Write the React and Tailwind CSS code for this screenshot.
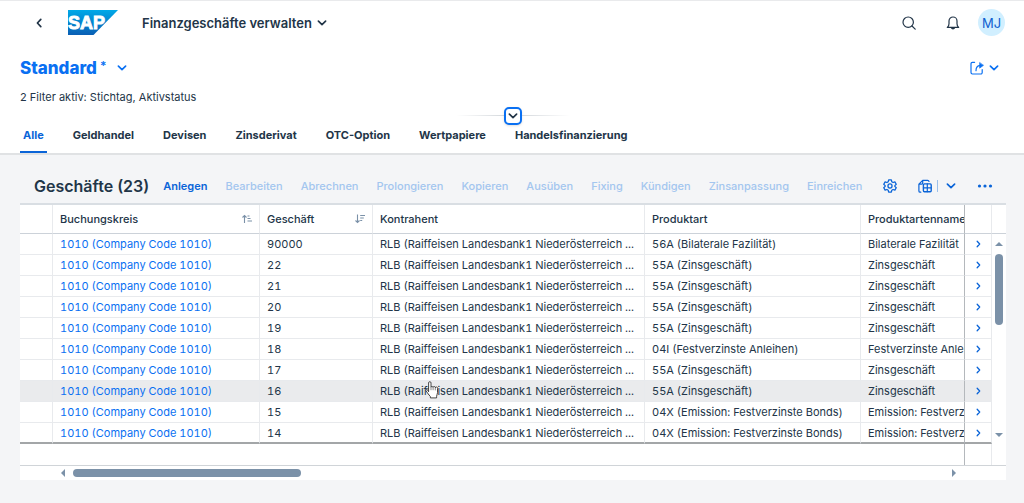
import React from "react";

const tabs = ["Alle", "Geldhandel", "Devisen", "Zinsderivat", "OTC-Option", "Wertpapiere", "Handelsfinanzierung"];

const actions = [
  "Bearbeiten",
  "Abrechnen",
  "Prolongieren",
  "Kopieren",
  "Ausüben",
  "Fixing",
  "Kündigen",
  "Zinsanpassung",
  "Einreichen",
];

const rows = [
  ["90000", "56A (Bilaterale Fazilität)", "Bilaterale Fazilität"],
  ["22", "55A (Zinsgeschäft)", "Zinsgeschäft"],
  ["21", "55A (Zinsgeschäft)", "Zinsgeschäft"],
  ["20", "55A (Zinsgeschäft)", "Zinsgeschäft"],
  ["19", "55A (Zinsgeschäft)", "Zinsgeschäft"],
  ["18", "04I (Festverzinste Anleihen)", "Festverzinste Anleihen"],
  ["17", "55A (Zinsgeschäft)", "Zinsgeschäft"],
  ["16", "55A (Zinsgeschäft)", "Zinsgeschäft"],
  ["15", "04X (Emission: Festverzinste Bonds)", "Emission: Festverzinste Bonds"],
  ["14", "04X (Emission: Festverzinste Bonds)", "Emission: Festverzinste Bonds"],
];

const hovered = "16";

function Chevron({ className = "h-2 w-3" }) {
  return (
    <svg viewBox="0 0 12 8" className={className} fill="none" stroke="currentColor" strokeWidth="1.7" strokeLinecap="round" strokeLinejoin="round" aria-hidden="true">
      <path d="M2.4 2.2 6 5.6l3.6-3.4" />
    </svg>
  );
}

function SapLogo() {
  return (
    <svg viewBox="0 0 50 25" className="h-[25px] w-[50px]" role="img" aria-label="SAP">
      <defs>
        <linearGradient id="sapBlue" x1="0" y1="0" x2="0" y2="1">
          <stop offset="0" stopColor="#00a9e8" />
          <stop offset="1" stopColor="#0a5fb4" />
        </linearGradient>
      </defs>
      <path d="M0 0h50L25.500 25H0z" fill="url(#sapBlue)" />
      <text x="0" y="19" fontFamily="Liberation Sans, Arial, sans-serif" fontWeight="700" fontSize="18" fill="#fff" stroke="#fff" strokeWidth="0.9">
        SAP
      </text>
    </svg>
  );
}

function SearchIcon() {
  return (
    <svg viewBox="0 0 14 14" className="h-3.5 w-3.5" fill="none" stroke="currentColor" strokeWidth="1.2" strokeLinecap="round" aria-hidden="true">
      <circle cx="6.200" cy="6.200" r="5.200" />
      <path d="m10 10 3.200 3.200" />
    </svg>
  );
}

function BellIcon() {
  return (
    <svg viewBox="0 0 14 14" className="h-3.5 w-3.5" fill="none" stroke="currentColor" strokeWidth="1.2" strokeLinejoin="round" aria-hidden="true">
      <path d="M1.300 11.400c1.300-1 1.700-2 1.700-3.700V5a4 4 0 0 1 8 0v2.700c0 1.700.4 2.700 1.700 3.700z" />
      <path d="M5.400 11.800a1.700 1.500 0 0 0 3.200 0z" fill="currentColor" />
    </svg>
  );
}

function ShareIcon() {
  return (
    <svg viewBox="0 0 14 14" className="h-3.5 w-3.5" fill="none" stroke="currentColor" strokeWidth="1.2" strokeLinecap="round" strokeLinejoin="round" aria-hidden="true">
      <path d="M4.600 1.300H2.400A1.400 1.400 0 0 0 1 2.700v8.900A1.400 1.400 0 0 0 2.400 13h8.400a1.400 1.400 0 0 0 1.400-1.400V8.500" />
      <path d="M6 9.700C6 6.400 7.400 4.600 10 4.600" />
      <path d="M9.600 1.800v5.400l3.700-2.700z" fill="currentColor" strokeWidth="0.6" />
    </svg>
  );
}

function GearIcon() {
  return (
    <svg viewBox="0 0 24 24" className="h-3.5 w-3.5" fill="none" stroke="currentColor" strokeWidth="2.2" strokeLinejoin="round" aria-hidden="true">
      <path d="M9.700 1.500h4.600l.8 3.300 2.100 1.200 3.200-1 2.300 4-2.400 2.300v1.400l2.400 2.300-2.300 4-3.200-1-2.100 1.200-.8 3.300H9.700l-.8-3.300L6.800 18l-3.200 1-2.300-4 2.400-2.300v-1.400L1.300 9l2.300-4 3.200 1 2.100-1.200z" />
      <circle cx="12" cy="12" r="3.500" />
    </svg>
  );
}

function ExportIcon() {
  return (
    <svg viewBox="0 0 14 14" className="h-3.5 w-3.5" fill="none" stroke="currentColor" strokeWidth="1.2" strokeLinecap="round" strokeLinejoin="round" aria-hidden="true">
      <path d="M2.800 13.200h-.6A1.300 1.300 0 0 1 .9 11.900V5.200L4.700 1.400h5a1.300 1.300 0 0 1 1.300 1.100M1 5.200h2.400a1.300 1.300 0 0 0 1.300-1.300V1.500" />
      <rect x="5.400" y="4.900" width="7.800" height="7.800" rx="1" strokeWidth="1.400" />
      <path d="M5.400 8.800h7.800M9.300 4.900v7.800" />
    </svg>
  );
}

function SortAsc() {
  return (
    <svg viewBox="0 0 10 10" className="h-2.5 w-2.5 shrink-0" fill="none" stroke="#7b91a8" strokeWidth="1.1" aria-hidden="true">
      <path d="M2.500 9V1.500M.5 3.500l2-2 2 2M5.500 2h2M5.500 4.500h3M5.500 7h4.500" />
    </svg>
  );
}

function SortDesc() {
  return (
    <svg viewBox="0 0 10 10" className="h-2.5 w-2.5 shrink-0" fill="none" stroke="#7b91a8" strokeWidth="1.100" aria-hidden="true">
      <path d="M2.500.5V8.500M.5 6.500l2 2 2-2M5.200 1.500H10M5.200 4h3.600M5.200 6.500h2" />
    </svg>
  );
}

function HandCursor() {
  return (
    <svg viewBox="0 0 14 18" className="pointer-events-none absolute left-[52px] top-0 h-[18px] w-3.5" aria-hidden="true">
      <path
        d="M3.600 10.800V1.900a1.200 1.200 0 0 1 2.400 0v4.300a1.100 1.100 0 0 1 2.100.2 1.100 1.100 0 0 1 2.200.4 1.100 1.100 0 0 1 2.200.7v4.200c0 1.300-.9 2.300-.9 3.600v1.600H5.400v-1.300C4 14.200 2.600 12 1 9.900c-.6-1 .7-1.900 1.500-1.100z"
        fill="#fff"
        stroke="#333"
        strokeWidth="0.900"
        strokeLinejoin="round"
      />
      <path d="M6 6.200v3M8.100 6.600V9.200M10.300 7v2.400" stroke="#555" strokeWidth="0.700" fill="none" />
    </svg>
  );
}

function Triangle({ points, className }) {
  return (
    <svg viewBox="0 0 8 8" className={className} fill="#7b91a8" aria-hidden="true">
      <polygon points={points} />
    </svg>
  );
}

export default function App() {
  const th = "border-r border-[#e8eaed] px-[7px] text-left font-medium whitespace-nowrap overflow-hidden";
  const td = "border-r border-b border-[#e8eaed] px-[7px] whitespace-nowrap overflow-hidden";
  return (
    <div className="min-h-screen bg-[#f4f5f7] font-['Inter',sans-serif] text-[11px] leading-4 text-[#223548]">
      <div className="border-t border-[#e9eaec] border-b-2 border-b-[#e0e2e4] bg-white">
        <header className="flex h-[43px] items-center pr-[19px] pl-8">
          <button aria-label="Zurück" className="flex w-3.5 justify-center">
            <Chevron className="h-2 w-3 rotate-90" />
          </button>
          <a href="#" className="ml-[22px]">
            <SapLogo />
          </a>
          <button className="ml-6 flex items-center gap-1 text-[13px] font-semibold">
            Finanzgeschäfte verwalten
            <Chevron />
          </button>
          <div className="ml-auto flex items-center">
            <button aria-label="Suchen">
              <SearchIcon />
            </button>
            <button aria-label="Benachrichtigungen" className="ml-[30px]">
              <BellIcon />
            </button>
            <button className="ml-[18px] flex h-[27px] w-[27px] items-center justify-center rounded-full bg-[#d1efff] text-[13px] text-[#0f5fd0]">MJ</button>
          </div>
        </header>

        <div className="flex h-12 items-center justify-between pr-6 pl-5 text-[#0a70f2]">
          <button className="flex items-center text-[17px] font-extrabold">
            Standard
            <span className="ml-[3px] self-start text-xs leading-3 font-semibold">*</span>
            <Chevron className="ml-2.5 h-2 w-3" />
          </button>
          <button aria-label="Teilen" className="flex items-center gap-1">
            <ShareIcon />
            <Chevron />
          </button>
        </div>

        <p className="px-5 leading-[10px]">2 Filter aktiv: Stichtag, Aktivstatus</p>

        <div className="flex h-[21px] items-center justify-center pt-1.5 pl-0.5">
          <span className="h-px w-12 bg-linear-to-l from-[#d5d9dd] to-transparent" />
          <button aria-label="Kopfbereich einblenden" className="flex h-[18px] w-[18px] items-center justify-center rounded-[5px] border-2 border-[#0a70f2] bg-white shadow">
            <Chevron className="h-2 w-3 shrink-0" />
          </button>
          <span className="h-px w-12 bg-linear-to-r from-[#d5d9dd] to-transparent" />
        </div>

        <nav className="flex h-[30px] gap-[23px] pl-5 font-bold">
          {tabs.map((t, i) => (
            <a
              key={t}
              href="#"
              className={
                i === 0
                  ? "border-b-2 border-[#0a64d8] px-[3px] pt-1 text-[#0a64d8]"
                  : "px-[3px] pt-1"
              }
            >
              {t}
            </a>
          ))}
        </nav>
      </div>

      <main className="pr-[18px] pl-5 pt-3.5">
        <div className="flex h-[34px] items-center pr-[13px] pl-3.5 font-medium whitespace-nowrap">
          <h1 className="text-base font-semibold">Geschäfte (23)</h1>
          <button className="ml-3.5 font-semibold text-[#0a64d8]">Anlegen</button>
          <div className="ml-[18px] flex gap-[18px] text-[#a3c6ef]">
            {actions.map((a) => (
              <button key={a} disabled>
                {a}
              </button>
            ))}
          </div>
          <div className="ml-auto flex items-center text-[#0a64d8]">
            <button aria-label="Einstellungen">
              <GearIcon />
            </button>
            <button aria-label="Exportieren" className="ml-[21px]">
              <ExportIcon />
            </button>
            <span className="ml-[5px] h-3 w-px bg-[#9cc0ea]" />
            <button aria-label="Exportoptionen" className="ml-[7px]">
              <Chevron />
            </button>
            <button aria-label="Weitere Optionen" className="ml-5">
              <svg viewBox="0 0 16 4" className="h-1 w-4" fill="currentColor" aria-hidden="true">
                <circle cx="2.500" cy="2" r="1.600" />
                <circle cx="8" cy="2" r="1.600" />
                <circle cx="13.500" cy="2" r="1.600" />
              </svg>
            </button>
          </div>
        </div>

        <div className="border-t-2 border-[#d9dee3] bg-white">
          <div className="flex border-b border-[#d0d4d8]">
            <div className="min-w-0 flex-1">
              <table className="w-full table-fixed border-separate border-spacing-0 tabular-nums">
                <colgroup>
                  <col className="w-[33px]" />
                  <col className="w-[207px]" />
                  <col className="w-[113px]" />
                  <col className="w-[272px]" />
                  <col className="w-[216px]" />
                  <col />
                  <col className="w-[27px]" />
                </colgroup>
                <thead>
                  <tr className="h-[29px] *:border-b *:border-b-[#ccd2d9]">
                    <th className={th} aria-label="Auswahl" />
                    <th className={th}>
                      <span className="flex items-center justify-between">
                        Buchungskreis <SortAsc />
                      </span>
                    </th>
                    <th className={th}>
                      <span className="flex items-center justify-between">
                        Geschäft <SortDesc />
                      </span>
                    </th>
                    <th className={th}>Kontrahent</th>
                    <th className={th}>Produktart</th>
                    <th className="overflow-hidden border-r border-[#b4b8bc] pl-[7px] text-left font-medium whitespace-nowrap">Produktartenname</th>
                    <th className={th} aria-label="Navigation" />
                  </tr>
                </thead>
                <tbody>
                  {rows.map(([id, art, name]) => (
                    <tr
                      key={id}
                      className={
                        id === hovered
                          ? "h-[21px] bg-[#eaebed]"
                          : "h-[21px] last:*:border-b-2 last:*:border-b-[#a3a6a8] last:first:*:border-b"
                      }
                    >
                      <td className={td} />
                      <td className={td}>
                        <a href="#" className="text-[#0a70f2]">
                          1010 (Company Code 1010)
                        </a>
                      </td>
                      <td className={td}>{id}</td>
                      <td className={`${td} relative`}>
                        RLB (Raiffeisen Landesbank1 Niederösterreich ...
                        {id === hovered && <HandCursor />}
                      </td>
                      <td className={td}>{art}</td>
                      <td className="overflow-hidden border-r border-b border-r-[#b4b8bc] border-b-[#e8eaed] pl-[7px] whitespace-nowrap">{name}</td>
                      <td className="border-r border-b border-[#e8eaed] text-[#0a64d8]">
                        <button aria-label={`Geschäft ${id} öffnen`} className="flex w-full justify-center">
                          <Chevron className="h-1.5 w-[9px] -rotate-90" />
                        </button>
                      </td>
                    </tr>
                  ))}
                </tbody>
                <tfoot>
                  <tr className="h-[21px]">
                    <td colSpan={6} className="border-r border-[#b4b8bc]" />
                    <td className="border-r border-[#e8eaed]" />
                  </tr>
                </tfoot>
              </table>
            </div>
            <div className="flex w-3.5 flex-col items-center pb-[26px]">
              <div className="h-[29px] w-full shrink-0 border-b border-[#ccd2d9]" />
              <Triangle points="0,6 4,2 8,6" className="mt-1.5 h-2 w-2" />
              <div className="mt-1.5 h-[71px] w-2 rounded-full bg-[#7b91a8]" />
              <Triangle points="0,2 4,6 8,2" className="mt-auto h-2 w-2" />
            </div>
          </div>
          <div className="flex h-[14px] items-center pr-12 pl-[39px]">
            <Triangle points="6,0 2,4 6,8" className="h-2 w-2" />
            <div className="ml-1.5 h-2 w-[228px] rounded-full bg-[#7b91a8]" />
            <Triangle points="2,0 6,4 2,8" className="ml-auto h-2 w-2" />
          </div>
        </div>
      </main>
    </div>
  );
}
